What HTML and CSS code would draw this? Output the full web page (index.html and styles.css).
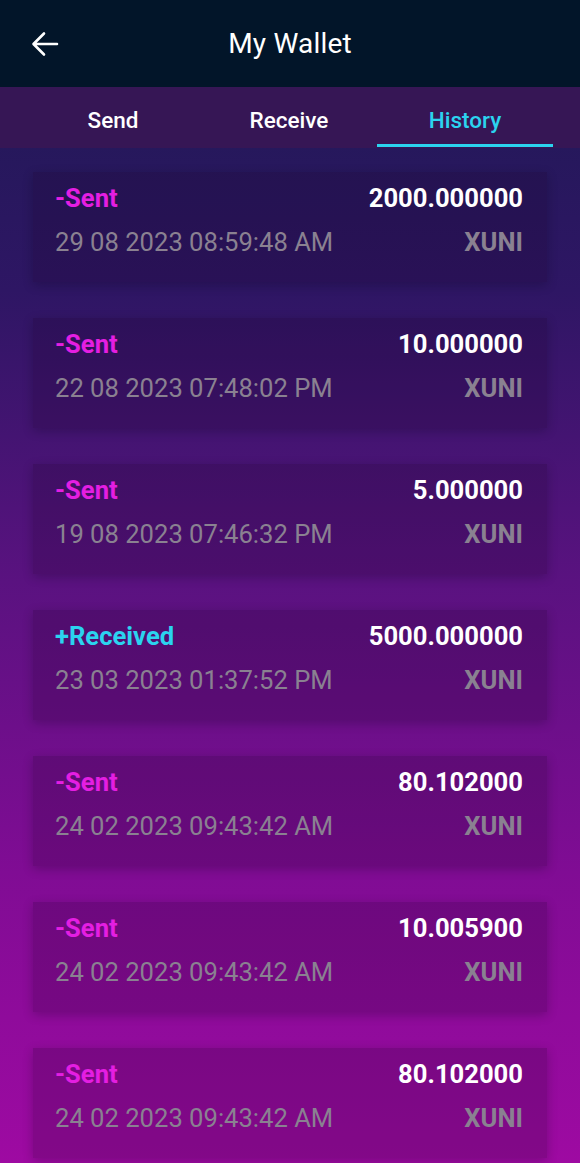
FILE: index.html
```html
<!DOCTYPE html>
<html lang="en">
  <head>
    <meta charset="UTF-8" />
    <meta name="viewport" content="width=device-width, initial-scale=1.0" />
    <title>My Wallet</title>
    <link rel="stylesheet" href="styles.css">
  </head>
  <body>
    <header class="topbar">
      <button class="back" aria-label="Back">
        <svg width="28" height="28" viewBox="0 0 28 28" xmlns="http://www.w3.org/2000/svg">
          <path d="M26 14H3M13 3.5 2.5 14 13 24.5" fill="none" stroke="#fff" stroke-width="2.6" stroke-linecap="round" stroke-linejoin="round" />
        </svg>
      </button>
      <h1>My Wallet</h1>
    </header>

    <nav class="tabs">
      <a>Send</a>
      <a>Receive</a>
      <a class="active">History</a>
    </nav>

    <main class="history">
      <article class="tx">
        <div class="row"><span class="type sent">-Sent</span><span class="amount">2000.000000</span></div>
        <div class="row"><span class="date">29 08 2023 08:59:48 AM</span><span class="coin">XUNI</span></div>
      </article>
      <article class="tx">
        <div class="row"><span class="type sent">-Sent</span><span class="amount">10.000000</span></div>
        <div class="row"><span class="date">22 08 2023 07:48:02 PM</span><span class="coin">XUNI</span></div>
      </article>
      <article class="tx">
        <div class="row"><span class="type sent">-Sent</span><span class="amount">5.000000</span></div>
        <div class="row"><span class="date">19 08 2023 07:46:32 PM</span><span class="coin">XUNI</span></div>
      </article>
      <article class="tx">
        <div class="row"><span class="type received">+Received</span><span class="amount">5000.000000</span></div>
        <div class="row"><span class="date">23 03 2023 01:37:52 PM</span><span class="coin">XUNI</span></div>
      </article>
      <article class="tx">
        <div class="row"><span class="type sent">-Sent</span><span class="amount">80.102000</span></div>
        <div class="row"><span class="date">24 02 2023 09:43:42 AM</span><span class="coin">XUNI</span></div>
      </article>
      <article class="tx">
        <div class="row"><span class="type sent">-Sent</span><span class="amount">10.005900</span></div>
        <div class="row"><span class="date">24 02 2023 09:43:42 AM</span><span class="coin">XUNI</span></div>
      </article>
      <article class="tx">
        <div class="row"><span class="type sent">-Sent</span><span class="amount">80.102000</span></div>
        <div class="row"><span class="date">24 02 2023 09:43:42 AM</span><span class="coin">XUNI</span></div>
      </article>
    </main>
  </body>
</html>
```

FILE: styles.css
```css
body {
  margin: 0;
  padding: 0;
  min-height: 100vh;
  font-family: Roboto, "Liberation Sans", sans-serif;
  background: linear-gradient(180deg, #1e1a54 0%, #2e1664 25%, #5a1280 50%, #800c94 75%, #9e0aa2 100%);
  color: #fff;
  overflow: hidden;
}
.topbar {
  height: 87px;
  display: flex;
  align-items: center;
  justify-content: center;
  position: relative;
  background-color: #021529;
}
.topbar h1 {
  margin: 0;
  font-size: 28px;
  font-weight: 400;
  letter-spacing: 0.2px;
}
.topbar .back {
  position: absolute;
  left: 31px;
  top: 30px;
  padding: 0;
  border: none;
  line-height: 0;
  background: none;
}
.tabs {
  height: 61px;
  display: grid;
  grid-template-columns: repeat(3, 176px);
  padding: 0 27px 0 25px;
  background-color: #361655;
}
.tabs a {
  display: flex;
  align-items: center;
  justify-content: center;
  font-size: 22.5px;
  font-weight: 500;
  color: #fff;
  border-bottom: 3px solid transparent;
  padding-top: 8px;
  margin-bottom: 1px;
}
.tabs a.active {
  color: #2bd3ef;
  border-bottom-color: #2bd3ef;
}
.history {
  display: flex;
  flex-direction: column;
  gap: 36px;
  padding: 24px 33px 0;
}
.tx {
  height: 110px;
  box-sizing: border-box;
  padding: 11px 24px 0 22px;
  display: flex;
  flex-direction: column;
  gap: 14px;
  background-color: rgba(25, 0, 35, 0.2);
  box-shadow: 0 3px 10px rgba(10, 0, 20, 0.24);
}
.tx .row {
  display: flex;
  justify-content: space-between;
  line-height: 30px;
  font-size: 25.6px;
}
.tx .type,
.tx .amount,
.tx .coin {
  font-weight: 700;
}
.tx .type.sent {
  color: #e41ee2;
}
.tx .type.received {
  color: #2bd3ef;
}
.tx .amount {
  color: #fff;
}
.tx .date {
  color: #8a8191;
}
.tx .coin {
  color: #8a8191;
}
```
